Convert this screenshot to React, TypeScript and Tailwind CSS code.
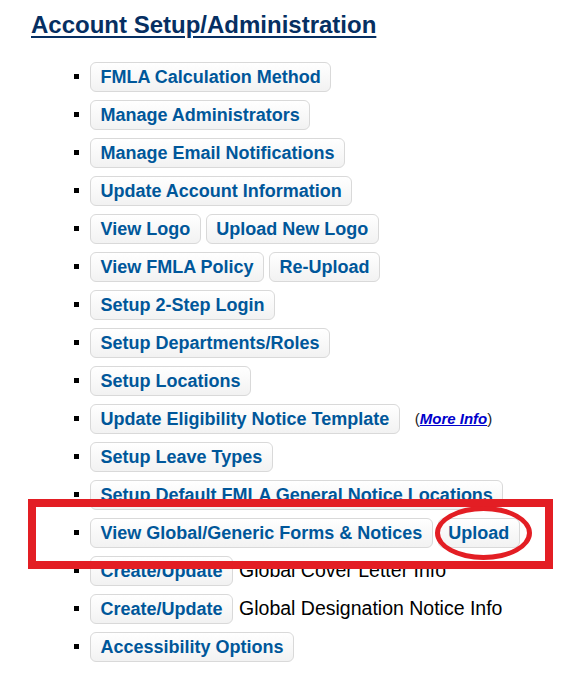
import React from 'react';

const btn =
    'inline-flex items-center h-[30px] px-[9.5px] border border-[#d9d9d9] rounded-[6px] bg-gradient-to-b from-white to-[#f2f2f2] text-[18px] font-bold text-[#00579a] whitespace-nowrap';

type Row = { buttons: string[]; note?: string; link?: boolean };

const rows: Row[] = [
    { buttons: ['FMLA Calculation Method'] },
    { buttons: ['Manage Administrators'] },
    { buttons: ['Manage Email Notifications'] },
    { buttons: ['Update Account Information'] },
    { buttons: ['View Logo', 'Upload New Logo'] },
    { buttons: ['View FMLA Policy', 'Re-Upload'] },
    { buttons: ['Setup 2-Step Login'] },
    { buttons: ['Setup Departments/Roles'] },
    { buttons: ['Setup Locations'] },
    { buttons: ['Update Eligibility Notice Template'], link: true },
    { buttons: ['Setup Leave Types'] },
    { buttons: ['Setup Default FMLA General Notice Locations'] },
    { buttons: ['View Global/Generic Forms & Notices', 'Upload'] },
    { buttons: ['Create/Update'], note: 'Global Cover Letter Info' },
    { buttons: ['Create/Update'], note: 'Global Designation Notice Info' },
    { buttons: ['Accessibility Options'] },
];

export default function App() {
    return (
        <div className="relative w-[569px] h-[682px] bg-white overflow-hidden pl-[31px] pt-[11px]" style={{ fontFamily: '"Liberation Sans", Arial, sans-serif' }}>
            <h1 className="text-[24px] font-bold text-[#062f62] underline decoration-2 underline-offset-[3px] leading-[28px]">
                Account Setup/Administration
            </h1>

            <ul className="mt-[23px] pl-[59px] list-[square] marker:text-black marker:text-[15px]">
                {rows.map((row, i) => (
                    <li key={i} className="mb-[8px] h-[30px]">
                        <div className="inline-flex items-center gap-[5px] align-middle">
                            {row.buttons.map((b) => (
                                <button key={b} className={btn}>
                                    {b}
                                </button>
                            ))}
                            {row.note && (
                                <span className="ml-[1px] text-[19.5px] text-black">{row.note}</span>
                            )}
                            {row.link && (
                                <span className="ml-[10px] text-[15px] text-[#222]">
                                    (<a href="#" className="font-bold italic text-[#0000cc] underline">More Info</a>)
                                </span>
                            )}
                        </div>
                    </li>
                ))}
            </ul>

            {/* red highlight box */}
            <div className="absolute left-[28px] top-[499px] w-[525px] h-[70px] border-[8px] border-[#e31e24]" />
            {/* red circle around Upload */}
            <div className="absolute left-[435px] top-[506px] w-[97px] h-[54px] rounded-[50%] border-[5px] border-[#e31e24]" />
        </div>
    );
}
